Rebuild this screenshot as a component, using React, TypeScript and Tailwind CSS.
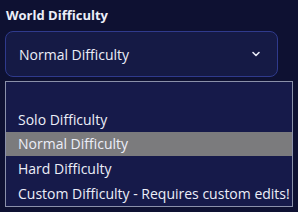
import React from "react";

export default function App() {
  const items = ["", "Solo Difficulty", "Normal Difficulty", "Hard Difficulty", "Custom Difficulty - Requires custom edits!"];
  return (
    <div
      className="w-[298px] h-[212px] bg-[#0e1132] text-[#eceef8] overflow-hidden relative"
      style={{ fontFamily: '"Open Sans", "Noto Sans", sans-serif' }}
    >
      <div className="pl-[6px] pt-[5px] text-[13px] font-bold leading-[20px]">World Difficulty</div>
      <div className="ml-[5px] mt-[6px] w-[273px] h-[46px] rounded-[8px] border border-[#2f3a8c] bg-[#151a45] flex items-center justify-between pl-[13px] pr-[16px]">
        <span className="text-[14px] font-medium">Normal Difficulty</span>
        <svg width="10" height="10" viewBox="0 0 10 10" fill="none">
          <path d="M2 3.5 L5 6.5 L8 3.5" stroke="#e6e8f5" strokeWidth="1.6" strokeLinecap="round" strokeLinejoin="round" />
        </svg>
      </div>
      <div className="absolute left-[5px] top-[81px] w-[288px] h-[126px] border border-[#8a90aa] bg-[#161a4a] flex flex-col">
        {items.map((t, i) => (
          <div
            key={i}
            className={`h-[25px] flex items-center pl-[12px] text-[14px] font-medium whitespace-nowrap ${i === 2 ? "bg-[#7b7b7d]" : ""}`}
          >
            {t}
          </div>
        ))}
      </div>
    </div>
  );
}
